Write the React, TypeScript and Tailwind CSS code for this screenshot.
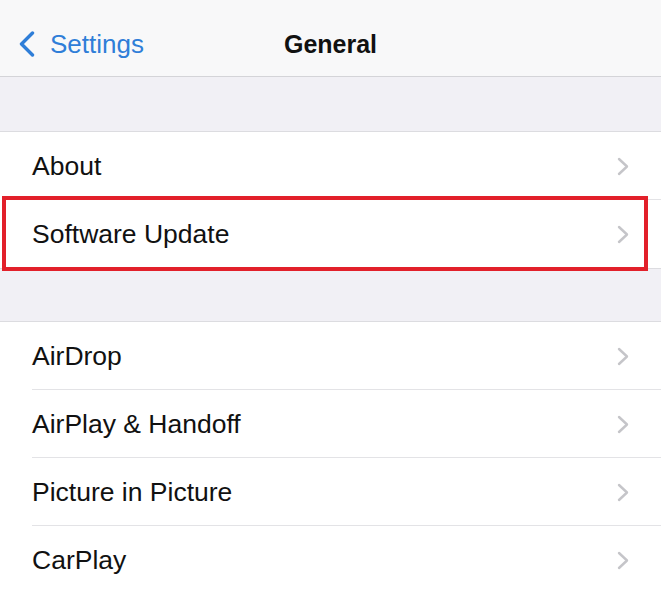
const groups = [
  ["About", "Software Update"],
  ["AirDrop", "AirPlay & Handoff", "Picture in Picture", "CarPlay"],
];

function Chevron() {
  return (
    <svg width="12" height="19" viewBox="0 0 12 19" fill="none" className="shrink-0">
      <path d="M2 2 L10 9.5 L2 17" stroke="#c5c5c9" strokeWidth="2.4" strokeLinecap="round" strokeLinejoin="round" />
    </svg>
  );
}

function Row({ label, last, highlight }: { label: string; last: boolean; highlight: boolean }) {
  return (
    <div className="relative h-[68px] flex items-center pl-[32px] pr-[32px] bg-white">
      <span className="flex-1 text-[26.5px] leading-none text-[#111]">{label}</span>
      <Chevron />
      {!last && <div className="absolute left-[32px] right-0 bottom-0 h-px bg-[#e3e3e6]" />}
      {highlight && (
        <div className="absolute top-[-4px] bottom-[-3px] left-[2px] right-[13px] border-[4px] border-[#e2202a]" />
      )}
    </div>
  );
}

export default function App() {
  return (
    <div className="w-[661px] h-[591px] overflow-hidden bg-[#f1f0f5] font-['Liberation_Sans',Arial,sans-serif]">
      <div className="relative h-[77px] bg-[#f8f8f9] border-b border-[#d4d4d8] flex items-center pt-[12px]">
        <div className="flex items-center pl-[19px] gap-[15px] text-[#2f7ed8]">
          <svg width="16" height="26" viewBox="0 0 16 26" fill="none">
            <path d="M13.5 2 L2.5 13 L13.5 24" stroke="#2f7ed8" strokeWidth="3.4" strokeLinecap="round" strokeLinejoin="round" />
          </svg>
          <span className="text-[26px] leading-none">Settings</span>
        </div>
        <span className="absolute left-0 right-0 text-center text-[25px] leading-none font-bold text-[#111] pointer-events-none">
          General
        </span>
      </div>

      <div className="h-[54px]" />
      {groups.map((items, gi) => (
        <div key={gi}>
          <div className="border-t border-b border-[#dcdce0]">
            {items.map((label, i) => (
              <Row key={label} label={label} last={i === items.length - 1} highlight={label === "Software Update"} />
            ))}
          </div>
          {gi === 0 && <div className="h-[52px]" />}
        </div>
      ))}
    </div>
  );
}
